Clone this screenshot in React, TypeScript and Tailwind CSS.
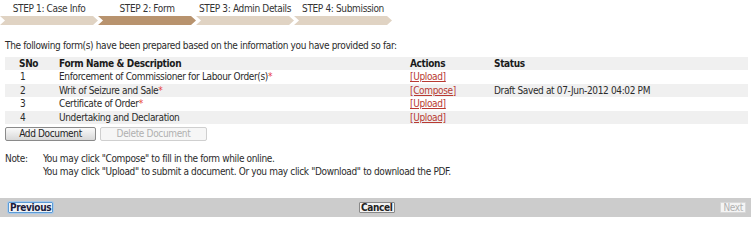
import React from "react";

const steps = [
  { label: "STEP 1: Case Info", active: false },
  { label: "STEP 2: Form", active: true },
  { label: "STEP 3: Admin Details", active: false },
  { label: "STEP 4: Submission", active: false },
];

const rows = [
  { no: "1", name: "Enforcement of Commissioner for Labour Order(s)", req: true, action: "[Upload]", status: "" },
  { no: "2", name: "Writ of Seizure and Sale", req: true, action: "[Compose]", status: "Draft Saved at 07-Jun-2012 04:02 PM" },
  { no: "3", name: "Certificate of Order", req: true, action: "[Upload]", status: "" },
  { no: "4", name: "Undertaking and Declaration", req: false, action: "[Upload]", status: "" },
];

export default function App() {
  return (
    <div
      className="w-[751px] h-[217px] bg-white text-[10px] leading-[13px] tracking-[-0.35px] text-[#2b2b2b] flex flex-col"
      style={{ fontFamily: '"DejaVu Sans Condensed", "DejaVu Sans", Verdana, sans-serif' }}
    >
      {/* steps */}
      <div className="flex">
        {steps.map((s) => (
          <div key={s.label} className="w-[98px] flex flex-col">
            <div className="h-[16px] pt-[2px] text-center whitespace-nowrap text-[#333]">{s.label}</div>
            <div
              className={`h-[9px] ${s.active ? "bg-[#b8936e]" : "bg-[#e0d3c3]"} [clip-path:polygon(0_0,93px_0,98px_50%,93px_100%,0_100%,5px_50%)]`}
            />
          </div>
        ))}
      </div>

      <div className="pl-[5px] mt-[14px]">
        The following form(s) have been prepared based on the information you have provided so far:
      </div>

      {/* table */}
      <div className="ml-[5px] mr-[3px] mt-[5px] flex flex-col">
        <div className="grid grid-cols-[54px_351px_84px_1fr] h-[13px] bg-[#f0f0f0] font-bold text-[#1a1a1a] items-center">
          <div className="pl-[14px]">SNo</div>
          <div>Form Name &amp; Description</div>
          <div>Actions</div>
          <div>Status</div>
        </div>
        {rows.map((r, i) => (
          <div
            key={r.no}
            className={`grid grid-cols-[54px_351px_84px_1fr] h-[13.5px] items-center ${i % 2 === 1 ? "bg-[#f0f0f0]" : "bg-white"}`}
          >
            <div className="pl-[15px]">{r.no}</div>
            <div>
              {r.name}
              {r.req && <span className="text-[#e8403a]">*</span>}
            </div>
            <div>
              <a className="text-[#b83a32] underline">{r.action}</a>
            </div>
            <div>{r.status}</div>
          </div>
        ))}
      </div>

      {/* buttons */}
      <div className="flex gap-[4px] pl-[5px] mt-[3px]">
        <button className="w-[91px] h-[14px] border border-[#8a8a8a] rounded-[2px] bg-gradient-to-b from-[#fafafa] to-[#d8d8d8] text-[#222] text-[10px] leading-[12px]">
          Add Document
        </button>
        <button className="w-[107px] h-[14px] border border-[#cfcfcf] rounded-[2px] bg-[#f6f6f6] text-[#b0b0b0] text-[10px] leading-[12px]">
          Delete Document
        </button>
      </div>

      {/* note */}
      <div className="flex pl-[5px] mt-[11px]">
        <div className="w-[38px]">Note:</div>
        <div className="flex flex-col">
          <div>You may click "Compose" to fill in the form while online.</div>
          <div>You may click "Upload" to submit a document. Or you may click "Download" to download the PDF.</div>
        </div>
      </div>

      {/* bottom bar */}
      <div className="mt-auto h-[19px] bg-[#cccccc] flex items-center justify-between px-[8px]">
        <button className="h-[11px] px-[1px] border border-[#5b9bd5] rounded-[1px] bg-[#eef2f6] font-bold text-[#1a1a3a] text-[10px] leading-[9px] outline outline-1 outline-[#a9c8e8]">
          Previous
        </button>
        <button className="h-[11px] px-[1px] border border-[#888] rounded-[1px] bg-[#f2f2f2] font-bold text-[#222] text-[10px] leading-[9px] mr-[20px]">
          Cancel
        </button>
        <button className="h-[11px] px-[2px] border border-[#d8d8d8] rounded-[1px] bg-[#f4f4f4] text-[#b0b0b0] text-[10px] leading-[9px] mr-[-3px]">
          Next
        </button>
      </div>
    </div>
  );
}
